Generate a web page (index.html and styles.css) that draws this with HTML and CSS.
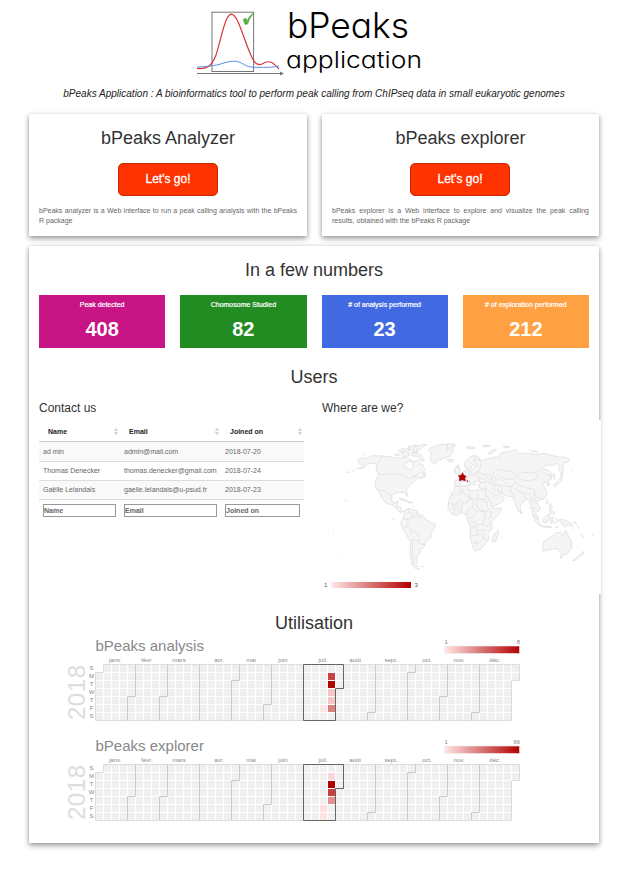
FILE: index.html
```html
<!DOCTYPE html>
<html lang="en">
<head>
<meta charset="utf-8">
<title>bPeaks application</title>
<link rel="stylesheet" href="styles.css">
</head>
<body>
<header class="header">
  <div class="brand">
    <svg class="logo" viewBox="196 8 89 70" aria-hidden="true">
      <rect x="212" y="12.2" width="41.6" height="59.3" fill="none" stroke="#777"/>
      <path d="M197 73.500H281" stroke="#777" fill="none"/>
      <path d="M280 71.500L284 73.500L280 75.500Z" fill="#777"/>
      <path d="M197 68.500C206 69 211 68 216 55C221 40 225 14 231.500 14.200C238 15 243 37 250 53C254 63 257 66 262 64C268 60 272 61 279 69" fill="none" stroke="#d9343b" stroke-width="1.200"/>
      <path d="M197 67.300C208 66 213 66 219 64.500C227 62 233 60 239 62C246 65 246 67.300 257 67.300C266 67.500 273 67.500 279 66" fill="none" stroke="#5b8fe8"/>
      <path d="M243.300 19.500L246 18.300L247.300 21Q249.500 15.500 253.500 13Q249 18.500 247.500 24L245 24.300Z" fill="#5fae46" stroke="#5fae46" stroke-width=".9"/>
    </svg>
    <svg class="wordmark" viewBox="285 8 140 70">
      <text x="287" y="38" class="word-big" textLength="122" lengthAdjust="spacingAndGlyphs">bPeaks</text>
      <text x="286" y="68" class="word-small" textLength="136" lengthAdjust="spacingAndGlyphs">application</text>
    </svg>
  </div>
  <p class="tagline">bPeaks Application : A bioinformatics tool to perform peak calling from ChIPseq data in small eukaryotic genomes</p>
</header>
<section class="tools">
  <article class="panel tool">
    <h2>bPeaks Analyzer</h2>
    <button class="go">Let's go!</button>
    <p>bPeaks analyzer is a Web interface to run a peak calling analysis with the bPeaks R package</p>
  </article>
  <article class="panel tool">
    <h2>bPeaks explorer</h2>
    <button class="go">Let's go!</button>
    <p>bPeaks explorer is a Web interface to explore and visualize the peak calling results, obtained with the bPeaks R package</p>
  </article>
</section>
<main class="panel dashboard">
  <h2>In a few numbers</h2>
  <div class="stats">
    <div class="stat pink"><span>Peak detected</span><b>408</b></div>
    <div class="stat green"><span>Chomosome Studied</span><b>82</b></div>
    <div class="stat blue"><span># of analysis performed</span><b>23</b></div>
    <div class="stat orange"><span># of exploration performed</span><b>212</b></div>
  </div>
  <h2 class="users-title">Users</h2>
  <div class="users">
    <section class="contact">
      <h3>Contact us</h3>
      <table>
        <colgroup><col class="c-name"><col class="c-email"><col class="c-date"></colgroup>
        <thead><tr><th><div>Name<i class="sort"></i></div></th><th><div>Email<i class="sort"></i></div></th><th><div>Joined on<i class="sort"></i></div></th></tr></thead>
        <tbody>
          <tr><td>ad min</td><td>admin@mail.com</td><td>2018-07-20</td></tr>
          <tr><td>Thomas Denecker</td><td>thomas.denecker@gmail.com</td><td>2018-07-24</td></tr>
          <tr><td>Gaëlle Lelandais</td><td>gaelle.lelandais@u-psud.fr</td><td>2018-07-23</td></tr>
        </tbody>
        <tfoot><tr><td><input placeholder="Name"></td><td><input placeholder="Email"></td><td><input placeholder="Joined on"></td></tr></tfoot>
      </table>
    </section>
    <section class="where">
      <h3>Where are we?</h3>
      <svg class="map" viewBox="322 420 279 174">
        <defs><linearGradient id="reds"><stop offset="0" stop-color="#ffe6e6"/><stop offset="1" stop-color="#b30000"/></linearGradient></defs>
        <g class="land" transform="translate(310 395) scale(.33333)">
          <path d="M150 206L143 194L156 188L170 190L185 182L218 183L240 185L265 190L285 187L300 193L310 200L298 200L283 205L282 215L296 220L302 226L308 214L308 201L320 196L328 200L330 208L337 207L345 225L335 233L320 237L308 248L324 242L334 246L347 238L345 246L330 252L322 250L310 262L298 272L289 284L293 305L284 293L265 292L247 298L245 315L252 325L264 318L260 333L272 336L272 348L284 350L270 352L258 340L245 330L228 325L217 311L205 286L198 278L196 260L203 244L206 238L199 224L200 208L186 204L172 208L165 216L148 222L158 212Z"/>
          <path class="border" d="M218 183L202 207M207 238H270L285 242L298 252L320 241M200 284L215 287L229 289L238 299L245 303M246 328L252 328M258 340L263 334"/>
          <path d="M254 180L265 174L270 183ZM274 174L295 170L300 181L281 186ZM265 166L282 160L290 167L273 171ZM295 155L318 150L311 164L300 166ZM304 171L322 173L338 185L343 197L332 198L324 184L308 183ZM317 152L350 148L334 160L321 168ZM290 160L300 158L297 168ZM310 166L322 170L315 174ZM336 238L344 231L348 240Z"/>
          <path d="M360 160L385 150L410 147L437 150L429 160L429 173L419 178L424 183L405 188L389 194L379 201L373 209L364 200L361 184L364 174L355 167Z"/>
          <path d="M412 194L420 192L431 195L426 201L415 200ZM434 224L440 213L447 210L449 235L436 236ZM268 312L281 311L294 320L280 316ZM293 320L306 322L300 325Z"/>
          <path d="M285 345L297 340L319 347L325 357L339 361L347 373L375 388L374 399L364 412L363 428L348 438L345 451L337 462L329 462L330 474L322 482L322 502L318 508L323 519L330 523L315 520L305 507L300 475L302 439L287 417L274 392L272 383L278 372L283 360Z"/>
          <path class="border" d="M297 341L294 352L308 358L305 370L292 372L278 371M319 347L318 363L330 366L338 362M305 370L318 363M292 372L295 383L287 392L303 402L302 416L313 407L322 420L330 430L326 437L330 446L345 449M302 439L308 433L326 437M308 433L307 470L311 510M345 451L333 445M281 395L291 399"/>
          <path class="dots" d="M107 232L117 231M127 228L134 228M140 222L149 219M104 315L107 316M109 318L113 321M247 373L251 374M53 418L56 418M69 410L72 410M95 492L98 493M332 515L341 514M161 180L165 179M305 322L309 325M309 334L310 337M394 268L397 268M418 282L420 283M418 295L421 295M438 180L440 181"/>
        </g>
        <g class="land" transform="translate(450 430) scale(.33333)">
          <path d="M14 168L15 151L30 149L33 130L45 123L50 112L43 110L46 94L58 82L74 76L89 84L86 91L96 92L105 88L124 85L140 80L150 85L148 73L160 67L180 65L195 58L207 70L235 70L260 74L280 70L320 80L345 82L360 89L354 96L341 98L338 110L341 124L334 132L326 116L327 103L315 101L310 107L290 105L276 116L297 121L306 132L304 147L294 152L300 165L293 167L290 157L276 158L287 178L292 190L282 207L266 212L257 215L266 225L273 238L262 245L252 231L249 237L256 248L267 267L258 264L247 249L243 230L239 214L232 207L224 211L210 228L213 248L205 244L196 220L189 201L170 198L154 190L142 179L151 195L163 203L160 212L145 223L127 229L119 210L104 188L108 177L91 176L83 165L92 160L87 152L74 155L74 167L62 158L56 151L63 166L57 168L47 153L35 156L27 168Z"/>
          <path class="sea" d="M60 112L68 108L65 98L77 86L75 98L72 104L82 106L68 117ZM87 146L98 147L107 151L99 156L88 153ZM127 143L135 140L137 148L134 155L140 163L133 165L130 154Z"/>
          <path class="border" d="M74 78L78 93M89 84L92 100L90 119L79 126L92 132L105 134L111 143L123 151L130 148M53 113L58 136L47 150M60 119L67 132L83 126M61 134L82 137L89 148M92 156H108L130 161M83 141L87 151M105 133L126 139L130 128L149 118L169 123L186 124L198 136L218 127L252 129L268 120L292 135L303 136L300 150M198 136L191 147L198 159L211 167L229 173L245 177L254 179L250 192L267 205L281 207M191 147L171 149L154 142L140 151M198 136L212 148L236 154L256 148L267 137L254 129M118 159L137 165L155 166L171 170L187 168L191 160M130 164L134 182M110 177L128 192L145 197M107 168L108 180M154 166L157 193M187 169L179 183L190 190L190 201M198 172L199 181L223 191L239 190L244 210L251 220M223 191L226 208M256 188L250 206L263 222M154 148L168 160L173 169"/>
          <path d="M16 170L52 167L54 177L71 183L80 178L107 183L107 195L123 216L130 235L156 234L146 253L124 276L124 297L113 312L118 326L104 345L94 357L74 363L68 348L60 320L62 292L52 270L51 256L35 249L20 257L5 252L-6 236L-5 215L3 196Z"/>
          <path class="border" d="M28 172L32 193L4 195M32 184L57 202L79 208L110 207M59 180L60 203L51 218L36 218L29 208L18 223L-4 221M84 181V207L79 226L92 244L123 246M57 203L69 213L68 233L53 240L50 255M0 240L13 226L13 252M18 221L27 233V250M36 218L33 247M68 233L80 242L70 262L52 264M80 242H101L105 262L96 283L82 285L74 275L57 278M112 215L112 232L125 247L120 265L105 264M60 290L80 290L82 315L61 317M96 283L112 287L123 280M82 303L98 299L108 305M77 318L90 313L101 324L82 343L76 333V348M100 307L103 325L113 331M42 178L32 189M94 207L112 219"/>
          <path d="M145 300L145 314L135 337L128 336L126 326L133 313ZM281 334L294 326L307 319L318 308L331 307L338 317L348 300L354 315L366 336L364 355L350 374L337 374L326 363L318 355L298 359L278 363ZM330 378L337 377L334 387ZM401 364L403 369L389 381L372 392L370 390L385 378ZM276 268L290 257L299 251L297 265L290 278L277 275ZM301 265L311 260L308 269L314 281L307 276L302 282ZM330 267L352 272L370 290L355 285L343 291L334 278L325 273ZM247 252L260 266L272 283L267 286L256 274ZM270 287L290 289L306 291L288 294ZM299 220L307 231L304 239L314 250L304 252L298 237ZM319 158L330 146L337 128L338 143L331 157L313 171L311 164ZM311 129L314 149L309 139ZM115 72L122 62L139 58L124 72ZM48 52L65 49L76 54L55 57ZM99 46L123 47L103 51ZM160 48L180 50L164 54ZM14 121L22 108L30 122L32 132L20 132ZM-8 42L12 42L5 51L-8 62ZM210 241L217 249L213 252Z"/>
          <path class="dots" d="M154 324H157M237 233L239 236M315 292L325 290M318 263L321 280M365 279L377 276L379 286M383 290L390 296M392 311L402 324M424 315L430 315M334 418L336 418M366 390L371 393M240 62L265 66M290 223L292 208M364 119L365 123M2 89L8 92"/>
          <path class="france" d="M38 128L42 136L49 139L45 143L46 153L37 150L28 153V143L25 136L33 136ZM50 151L54 153L53 156Z"/>
        </g>
        <text x="324" y="587">1</text><rect x="331.500" y="582" width="79.500" height="6" fill="url(#reds)"/><text x="414.500" y="587">3</text>
      </svg>
    </section>
  </div>
  <h2 class="usage-title">Utilisation</h2>
  <svg class="calendar" data-name="bPeaks analysis" data-max="8" data-values="29,1,#cc4242;29,2,#b30000;29,3,#f4c5c5;29,4,#f4c5c5;29,5,#dd8080;28,5,#ffe6e6" viewBox="29 636 570 100"></svg>
  <svg class="calendar" data-name="bPeaks explorer" data-max="96" data-values="29,1,#fbd5d7;29,2,#b30000;29,3,#c84040;29,4,#e39090;28,5,#fddfe0;28,6,#fee3e3" viewBox="29 636 570 100"></svg>
</main>
<script src="calendar.js"></script>
</body>
</html>
```
FILE: styles.css
```css
* { box-sizing: border-box; }
body { margin: 0; min-height: 869px; background: #fff; color: #333; font-family: "Liberation Sans", Arial, sans-serif; }
h2, h3, p { margin: 0; font-weight: 400; }
h2 { font-size: 18px; line-height: 20px; text-align: center; }
h3 { font-size: 12px; line-height: 14px; }
.header { width: 628px; height: 114px; padding-top: 8px; }
.brand { display: flex; padding-left: 196px; height: 70px; }
.logo { width: 89px; height: 70px; }
.wordmark { width: 140px; height: 70px; overflow: visible; }
.wordmark text { font-family: Inter, "Open Sans", sans-serif; font-feature-settings: "cv11" 1; font-weight: 300; fill: #000; }
.wordmark .word-big { font-size: 35px; }
.wordmark .word-small { font-size: 23px; }
.tagline { margin-top: 10px; text-align: center; font-size: 10px; line-height: 12px; font-style: italic; white-space: nowrap; color: #222; }
.tools { display: grid; grid-template-columns: 278px 277px; gap: 15px; margin-left: 29px; }
.panel { background: #fff; box-shadow: 0 3px 6px rgba(0,0,0,.28), 0 1px 4px rgba(0,0,0,.22); }
.tool { height: 122px; padding: 14px 10px 0; text-align: center; }
.go { display: block; width: 100px; height: 33px; margin: 15px 0 10px 79px; padding: 0 0 2px; border: 1px solid #cc2900; border-radius: 5px; background: #ff3300; color: #fff; font: 12px "Liberation Sans", Arial, sans-serif; -webkit-text-stroke: .3px #fff; }
.tool + .tool .go { margin-left: 78px; }
.tool p { font-size: 7px; line-height: 10px; text-align: justify; color: #666; }
.dashboard { width: 570px; height: 597px; margin: 10px 0 0 29px; padding-top: 14px; }
.stats { display: grid; grid-template-columns: repeat(4, 1fr); gap: 15px; height: 53px; margin: 15px 10px 0; }
.stat { display: flex; flex-direction: column; align-items: center; color: #fff; padding-top: 5px; }
.stat span { font-size: 7px; line-height: 9px; -webkit-text-stroke: .2px #fff; }
.stat b { font-size: 20px; line-height: 24px; margin-top: 8px; }
.pink { background: #c71585; }
.green { background: #228b22; }
.blue { background: #4169e1; }
.orange { background: #ffa042; }
.users-title { margin-top: 19px; }
.users { display: grid; grid-template-columns: 282px 279px; margin: 14px 0 0 10px; height: 193px; }
.where { display: flex; flex-direction: column; }
.where h3 { padding-left: 1px; }
.map { display: block; width: 279px; height: 174px; margin: 5px 0 0 1px; background: #fff; }
.land path { fill: #f5f5f5; stroke: #dedede; stroke-width: 2.4; stroke-linejoin: round; }
.land .border { fill: none; stroke: #e1e1e1; }
.land .dots { fill: none; stroke-width: 3; }
.land .sea { fill: #fff; }
.land .france { fill: #b30000; stroke: #b30000; stroke-width: 1; }
.map text { font-size: 6px; fill: #555; }
table { width: 265px; margin-top: 8px; table-layout: fixed; border-collapse: collapse; font-size: 7px; line-height: 9px; }
.c-name { width: 81px; } .c-email { width: 101px; } .c-date { width: 83px; }
th { height: 18px; padding: 0 1px 0 9px; text-align: left; color: #222; border-bottom: 1px solid #ccc; }
th div { display: flex; align-items: center; justify-content: space-between; }
.sort { display: block; width: 4px; height: 7px; margin-right: 1px; background: linear-gradient(#d5d5d5, #d5d5d5) 0 2px/4px 1px no-repeat, linear-gradient(#ddd, #ddd) 1px 0/2px 3px no-repeat, linear-gradient(#d5d5d5, #d5d5d5) 0 4px/4px 1px no-repeat, linear-gradient(#ddd, #ddd) 1px 4px/2px 3px no-repeat; }
tbody td { height: 19px; padding: 0 0 0 4px; white-space: nowrap; color: #666; border-bottom: 1px solid #ddd; }
tbody tr:first-child td { height: 20px; }
tbody tr:nth-child(odd) { background: #f9f9f9; }
tfoot td { padding: 4px 4px 0; }
input { display: block; width: 100%; height: 13px; margin: 0; padding: 0; border: 1px solid #999; border-radius: 0; font: bold 7px "Liberation Sans", Arial, sans-serif; }
input::placeholder { color: #666; opacity: 1; }
.usage-title { margin: 19px 0 3px; }
.calendar { display: block; width: 570px; height: 100px; }
.calendar .title { font-size: 15px; fill: #888; }
.calendar .year { font-size: 24px; fill: #ddd; }
.calendar .small { font-size: 6px; fill: #888; }
.calendar .month { fill: none; stroke: #ccc; }
.calendar .outline { fill: none; stroke: #ddd; }
.calendar .current { fill: none; stroke: #666; }
```
FILE: calendar.js
```js
const X = 95.5, Y = 664.5, S = 8;
// Days are counted from the Sunday that precedes 1 January 2018.
const starts = [1, 32, 60, 91, 121, 152, 182, 213, 244, 274, 305, 335, 366];
const months = [["janv.", 115], ["févr.", 147], ["mars", 179], ["avr.", 219], ["mai", 251], ["juin", 283], ["juil.", 323], ["août", 355], ["sept.", 391], ["oct.", 427], ["nov.", 459], ["déc.", 495]];
const edge = n => {
  const c = Math.floor(n / 7), r = n % 7;
  return r ? [[c + 1, 0], [c + 1, r], [c, r], [c, 7]] : [[c, 0], [c, 7]];
};
const path = pts => "M" + pts.map(([c, r]) => (X + c * S) + " " + (Y + r * S)).join("L");
document.querySelectorAll(".calendar").forEach((svg, k) => {
  const colors = {};
  svg.dataset.values.split(";").forEach(v => { const [c, r, f] = v.split(","); colors[c + "," + r] = f; });
  let out = `<defs><pattern id="hatch${k}" width="3" height="3" patternUnits="userSpaceOnUse"><rect width="3" height="3" fill="#f4f4f4"/><path d="M0 3L3 0" stroke="#e3e3e3" stroke-width=".8"/></pattern></defs>`;
  for (let n = 1; n < 366; n++) {
    const c = Math.floor(n / 7), r = n % 7;
    out += `<rect x="${X + c * S + .5}" y="${Y + r * S + .5}" width="7" height="7" fill="${colors[c + "," + r] || `url(#hatch${k})`}"/>`;
  }
  out += `<path class="outline" d="${path([[1, 0], [53, 0], [53, 2], [52, 2], [52, 7], [0, 7], [0, 1], [1, 1]])}Z"/>`;
  starts.slice(1, 12).forEach(n => { out += `<path class="month" d="${path(edge(n))}"/>`; });
  out += `<path class="current" d="${path([...edge(182), ...edge(213).reverse()])}Z"/>`;
  months.forEach(([t, x]) => { out += `<text class="small" x="${x}" y="662" text-anchor="middle">${t}</text>`; });
  [..."SMTWTFS"].forEach((t, r) => { out += `<text class="small" x="91.500" y="${670.3 + r * S}" text-anchor="middle">${t}</text>`; });
  out += `<text class="title" x="95.500" y="651">${svg.dataset.name}</text>`;
  out += `<text class="year" transform="translate(85 720) rotate(-90)" textLength="55">2018</text>`;
  out += `<rect x="444.500" y="646" width="75" height="7.500" fill="url(#reds)" stroke="#eee" stroke-width=".6"/>`;
  out += `<text class="small" x="444.500" y="644">1</text><text class="small" x="520" y="644" text-anchor="end">${svg.dataset.max}</text>`;
  svg.innerHTML = out;
});
```
